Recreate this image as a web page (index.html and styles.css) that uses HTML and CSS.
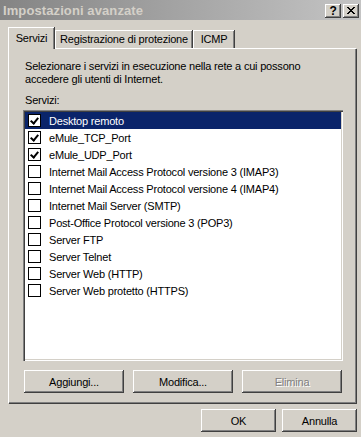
FILE: index.html
```html
<!DOCTYPE html>
<html>
<head>
    <title>Impostazioni avanzate</title>
    <link rel="stylesheet" href="styles.css">
</head>
<body>
    <div class="window">
        <div class="titlebar">
            <span class="title">Impostazioni avanzate</span>
            <div class="caption-buttons">
                <span class="cap-btn help">?</span>
                <span class="cap-btn">
                    <svg width="8" height="7" viewBox="0 0 8 7"><path d="M0 0h2v1h1v1h2v-1h1v-1h2v1h-1v1h-1v1h-1v1h1v1h1v1h1v1h-2v-1h-1v-1h-2v1h-1v1h-2v-1h1v-1h1v-1h1v-1h-1v-1h-1v-1h-1z" fill="#000"/></svg>
                </span>
            </div>
        </div>

        <div class="tabs">
            <div class="tab active">Servizi</div>
            <div class="tab tab-wide">Registrazione di protezione</div>
            <div class="tab tab-icmp">ICMP</div>
        </div>

        <div class="panel">
            <p class="intro">Selezionare i servizi in esecuzione nella rete a cui possono<br>accedere gli utenti di Internet.</p>
            <div class="label">Servizi:</div>
            <ul class="list">
                <li class="selected"><span class="check checked"></span>Desktop remoto</li>
                <li><span class="check checked"></span>eMule_TCP_Port</li>
                <li><span class="check checked"></span>eMule_UDP_Port</li>
                <li><span class="check"></span>Internet Mail Access Protocol versione 3 (IMAP3)</li>
                <li><span class="check"></span>Internet Mail Access Protocol versione 4 (IMAP4)</li>
                <li><span class="check"></span>Internet Mail Server (SMTP)</li>
                <li><span class="check"></span>Post-Office Protocol versione 3 (POP3)</li>
                <li><span class="check"></span>Server FTP</li>
                <li><span class="check"></span>Server Telnet</li>
                <li><span class="check"></span>Server Web (HTTP)</li>
                <li><span class="check"></span>Server Web protetto (HTTPS)</li>
            </ul>
            <div class="panel-buttons">
                <button class="btn wide">Aggiungi...</button>
                <button class="btn wide">Modifica...</button>
                <button class="btn wide" disabled>Elimina</button>
            </div>
        </div>

        <div class="dialog-buttons">
            <button class="btn">OK</button>
            <button class="btn">Annulla</button>
        </div>
    </div>
</body>
</html>
```

FILE: styles.css
```css
body {
    margin: 0;
    font-family: 'Liberation Sans', Arial, sans-serif;
    font-size: 11px;
    letter-spacing: -0.2px;
    color: #000;
    background-color: #d4d0c8;
}
.window {
    width: 361px;
    height: 437px;
    overflow: hidden;
    background-color: #d4d0c8;
}
.titlebar {
    height: 20px;
    display: flex;
    align-items: center;
    justify-content: space-between;
    background: linear-gradient(90deg, #848484, #c4c4c4);
    padding: 1px 2px 0 3px;
    box-sizing: border-box;
}
.title {
    font-weight: bold;
    color: #d4d0c8;
    font-size: 13px;
    letter-spacing: 0.1px;
}
.caption-buttons {
    display: flex;
    gap: 2px;
}
.cap-btn {
    width: 16px;
    height: 14px;
    box-sizing: border-box;
    display: flex;
    align-items: center;
    justify-content: center;
    background-color: #d4d0c8;
    box-shadow: inset -1px -1px #404040, inset 1px 1px #fff, inset -2px -2px #808080, inset 2px 2px #d4d0c8;
}
.cap-btn.help {
    font-weight: bold;
    font-size: 12px;
    line-height: 14px;
}
.tabs {
    display: flex;
    align-items: flex-end;
    margin: 7px 0 0 8px;
    height: 21px;
    position: relative;
    z-index: 1;
}
.tab {
    height: 18px;
    box-sizing: border-box;
    width: 46px;
    text-align: center;
    line-height: 17px;
    border-top: 1px solid #fff;
    border-left: 1px solid #fff;
    box-shadow: inset -1px 0 #808080, 1px 0 #404040;
}
.tab.active {
    height: 22px;
    margin-bottom: -1px;
    background-color: #d4d0c8;
    line-height: 20px;
}
.tab-wide {
    width: 137px;
    margin-left: 1px;
}
.tab-icmp {
    width: 41px;
    margin-left: 1px;
}
.panel {
    margin-left: 8px;
    width: 348px;
    height: 355px;
    box-sizing: border-box;
    padding: 11px 13px 0 14px;
    border-top: 1px solid #fff;
    border-left: 1px solid #fff;
    box-shadow: inset -1px -1px #808080, 1px 1px #404040;
}
.intro {
    margin: 0 0 8px 2px;
    line-height: 13px;
}
.label {
    margin-left: 2px;
    line-height: 13px;
    margin-bottom: 3px;
}
.list {
    list-style: none;
    margin: 0;
    padding: 2px;
    height: 251px;
    box-sizing: border-box;
    background-color: #fff;
    box-shadow: inset 1px 1px #808080, inset 2px 2px #404040, inset -1px -1px #fff, inset -2px -2px #d4d0c8;
}
.list li {
    height: 17px;
    display: flex;
    align-items: center;
    padding-left: 3px;
    white-space: nowrap;
}
.list li.selected {
    background-color: #0a246a;
    color: #fff;
}
.check {
    width: 11px;
    height: 11px;
    border: 1px solid #000;
    background-color: #fff;
    margin-right: 8px;
    display: flex;
    align-items: center;
    justify-content: center;
}
.check.checked::after {
    content: '';
    width: 3px;
    height: 6px;
    border: solid #000;
    border-width: 0 2px 2px 0;
    transform: rotate(40deg);
    margin-top: -2px;
}
.panel-buttons {
    display: flex;
    gap: 9px;
    margin: 9px 0 0 1px;
}
.btn {
    font-family: 'Liberation Sans', Arial, sans-serif;
    font-size: 11px;
    letter-spacing: -0.2px;
    color: #000;
    width: 75px;
    height: 23px;
    border: none;
    background-color: #d4d0c8;
    box-shadow: inset -1px -1px #404040, inset 1px 1px #fff, inset -2px -2px #808080, inset 2px 2px #d4d0c8;
    padding: 0;
}
.btn.wide {
    width: 100px;
}
.btn:disabled {
    color: #808080;
    text-shadow: 1px 1px #fff;
}
.dialog-buttons {
    display: flex;
    justify-content: flex-end;
    gap: 6px;
    margin: 6px 4px 0 0;
}
```
